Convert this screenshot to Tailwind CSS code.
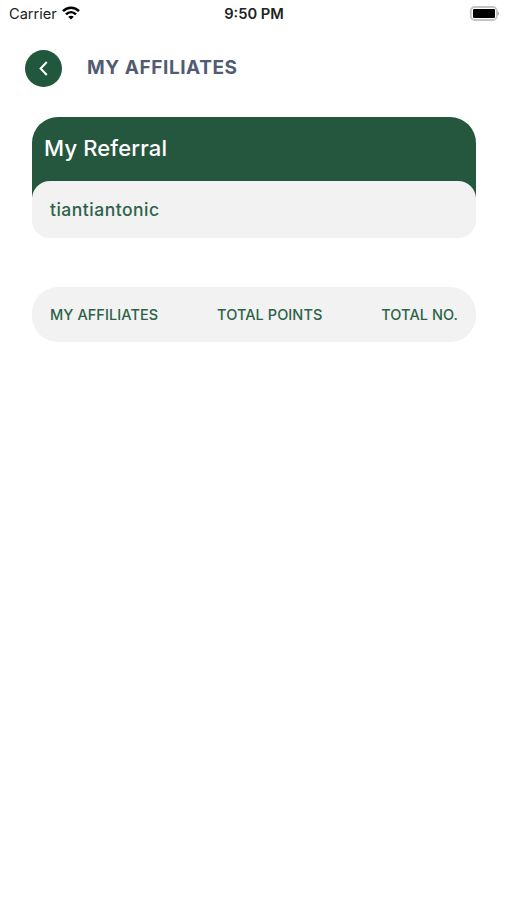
<!DOCTYPE html>
<html lang="en">

<head>
    <meta charset="UTF-8">
    <meta name="viewport" content="width=device-width, initial-scale=1.0">
    <script src="https://cdn.jsdelivr.net/npm/@tailwindcss/browser@4"></script>
    <title>My Affiliates</title>
</head>

<body class="bg-white h-screen overflow-hidden font-['Inter',sans-serif] whitespace-nowrap">
    <!-- status bar -->
    <div class="grid grid-cols-3 items-center h-7 pl-[9px] pr-[8px] text-[#222]">
        <div class="flex items-center gap-[5px]">
            <span class="pt-px text-[14.6px]">Carrier</span>
            <svg class="w-[18px] h-[14px] mb-[2px]" viewBox="0 0 18 14" fill="none" stroke="#000" stroke-width="2.6">
                <path d="M1 5.2C5.6 .6 12.4 .6 17 5.2" />
                <path d="M4 8.4c3-2.9 7-2.9 10 0" />
                <path d="M9 13.6 6.2 10.8c1.6-1.5 4-1.5 5.6 0z" fill="#000" stroke="none" />
            </svg>
        </div>
        <div class="text-center text-[14.7px] font-semibold">9:50 PM</div>
        <svg class="w-[30px] h-[15px] mb-[2px] justify-self-end" viewBox="1 0 30 15">
            <rect x="2.8" y="1" width="26" height="13" rx="4" fill="#fff" stroke="#c4c4c4" stroke-width="1.8" />
            <rect x="5" y="3" width="22" height="9" rx="1" fill="#000" />
            <path d="M29.5 5.2c2.2 1 2.2 3.6 0 4.6z" fill="#aaa" />
        </svg>
    </div>

    <!-- header -->
    <div class="flex items-center gap-[25px] pl-[25px] mt-[22px] h-[37px]">
        <button class="flex items-center justify-center size-[37px] rounded-full bg-[#20573d]">
            <svg class="w-[9px] h-[15px] mr-px" viewBox="0 0 9 15" fill="none" stroke="#fff" stroke-width="2">
                <path d="M7.8 1 1.6 7.5 7.8 14" />
            </svg>
        </button>
        <h1 class="text-[19px] font-bold tracking-[0.57px] text-[#515c72]">MY AFFILIATES</h1>
    </div>

    <!-- referral card -->
    <div class="ml-[32px] mr-[31px] mt-[30px]">
        <div class="h-20 pt-[15px] pl-[12px] rounded-t-[26px] bg-[#24573e]">
            <h2 class="text-[22px] leading-8 font-medium tracking-[0.15px] text-white">My Referral</h2>
        </div>
        <div class="relative flex items-center -mt-4 h-[57px] pt-[2px] pl-[18px] rounded-[18px] bg-[#f2f2f2]">
            <span class="text-[17.5px] font-medium tracking-[0.5px] text-[#2c6349]">tiantiantonic</span>
        </div>
    </div>

    <!-- affiliates table -->
    <div class="flex items-center justify-between ml-[32px] mr-[31px] mt-[49px] h-[55px] px-[18px] rounded-[26px] bg-[#f2f2f2] text-[14.5px] font-medium tracking-[0.07px] text-[#2c6349]">
        <span>MY AFFILIATES</span>
        <span>TOTAL POINTS</span>
        <span>TOTAL NO.</span>
    </div>
</body>

</html>
